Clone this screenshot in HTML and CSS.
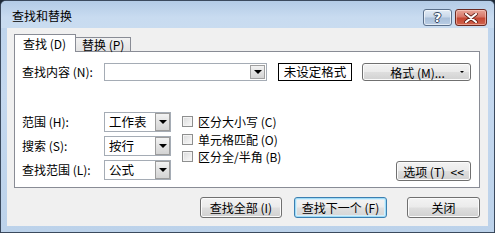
FILE: index.html
```html
<!DOCTYPE html>
<html>
<head>
<meta charset="utf-8">
<link rel="stylesheet" href="styles.css">
</head>
<body>
<div class="window">
  <div class="titlebar">
    <span class="title">查找和替换</span>
    <div class="caption-btns">
      <div class="cap-btn help">?</div>
      <div class="cap-btn close">
        <svg width="14" height="10" viewBox="0 0 14 10"><path d="M2 1 L12 9 M12 1 L2 9" stroke="#5a1a12" stroke-width="3.6" stroke-linecap="round"/><path d="M2 1 L12 9 M12 1 L2 9" stroke="#ffffff" stroke-width="2.2" stroke-linecap="round"/></svg>
      </div>
    </div>
  </div>
  <div class="client">
    <div class="tabs">
      <div class="tab active">查找 (D)</div>
      <div class="tab">替换 (P)</div>
    </div>
    <div class="panel">
      <div class="find-row">
        <span class="lbl">查找内容 (N):</span>
        <div class="combo wide"><div class="combo-field"></div><div class="combo-arrow"><i class="tri"></i></div></div>
        <div class="fmt-preview">未设定格式</div>
        <div class="btn fmt-btn"><span class="fmt-text">格式 (M)...</span><i class="mini-tri"></i></div>
      </div>
      <div class="opts">
        <div class="opt-grid">
          <span class="lbl">范围 (H):</span>
          <div class="combo small"><div class="combo-field">工作表</div><div class="combo-arrow"><i class="tri"></i></div></div>
          <span class="lbl">搜索 (S):</span>
          <div class="combo small"><div class="combo-field">按行</div><div class="combo-arrow"><i class="tri"></i></div></div>
          <span class="lbl">查找范围 (L):</span>
          <div class="combo small"><div class="combo-field">公式</div><div class="combo-arrow"><i class="tri"></i></div></div>
        </div>
        <div class="checks">
          <div class="check"><i class="box"></i><span>区分大小写 (C)</span></div>
          <div class="check"><i class="box"></i><span>单元格匹配 (O)</span></div>
          <div class="check"><i class="box"></i><span>区分全/半角 (B)</span></div>
        </div>
        <div class="btn options-btn">选项 (T)&nbsp;&nbsp;&lt;&lt;</div>
      </div>
    </div>
    <div class="actions">
      <div class="btn act-all">查找全部 (I)</div>
      <div class="btn act-next focused">查找下一个 (F)</div>
      <div class="btn act-close">关闭</div>
    </div>
  </div>
</div>
</body>
</html>
```

FILE: styles.css
```css
* { box-sizing: border-box; }
html, body { margin: 0; padding: 0; }
body {
  width: 495px;
  height: 233px;
  overflow: hidden;
  font-family: "Noto Sans CJK SC", "Liberation Sans", sans-serif;
  font-size: 12px;
  color: #000;
  background: #1f2a38;
}
.window {
  width: 495px;
  height: 233px;
  border: 1px solid #3b4a5e;
  border-radius: 6px 6px 0 0;
  background: linear-gradient(180deg, #bcd3ec 0%, #c4d8ef 40%, #bcd2ea 100%);
  padding: 0 6px 6px 6px;
  display: flex;
  flex-direction: column;
}
.titlebar {
  height: 27px;
  display: flex;
  align-items: flex-start;
  justify-content: space-between;
  background: linear-gradient(180deg, #b3cbe6 0%, #c8dbf0 60%, #c9dcf0 100%);
  margin: 0 -6px;
  padding: 0 6px;
  border-radius: 5px 5px 0 0;
}
.title {
  margin-top: 7px;
  margin-left: 5px;
  line-height: 16px;
  color: #000;
}
.caption-btns {
  display: flex;
  gap: 3px;
  margin-top: 8px;
  margin-right: 1px;
}
.cap-btn {
  height: 17px;
  border: 1px solid #5a6f8a;
  border-radius: 3px;
  display: flex;
  align-items: center;
  justify-content: center;
}
.help {
  width: 29px;
  background: linear-gradient(180deg, #e3ecf6 0%, #c8d7e9 48%, #a9bfd9 52%, #b9cde4 100%);
  box-shadow: inset 0 0 0 1px rgba(255,255,255,0.6);
  color: #fff;
  font-family: "DejaVu Sans", sans-serif;
  font-weight: bold;
  font-size: 13px;
  line-height: 13px;
  text-shadow: 0 0 1px #2a3a55, 1px 0 0 #3a4c6a, -1px 0 0 #3a4c6a, 0 1px 0 #3a4c6a, 0 -1px 0 #3a4c6a;
}
.close {
  width: 32px;
  border-color: #6b2a22;
  background: linear-gradient(180deg, #e8a598 0%, #d7786a 45%, #c54733 55%, #d0654f 100%);
  box-shadow: inset 0 0 0 1px rgba(255,220,210,0.5);
}
.client {
  flex: 1;
  background: #f0f0f0;
  padding: 6px 7px 0 7px;
  display: flex;
  flex-direction: column;
}
.tabs {
  display: flex;
  align-items: flex-end;
  height: 17px;
  position: relative;
  z-index: 1;
}
.tab {
  border: 1px solid #898c95;
  border-bottom: none;
  height: 14px;
  line-height: 13px;
  padding: 0 0 0 6px;
  width: 56px;
  background: linear-gradient(180deg, #f2f2f2 0%, #e3e3e3 100%);
  margin-left: -1px;
  white-space: nowrap;
}
.tab.active {
  width: 62px;
  height: 18px;
  margin-left: 0;
  margin-bottom: -1px;
  background: #fff;
  padding-left: 8px;
  line-height: 17px;
  z-index: 2;
}
.panel {
  width: 466px;
  height: 137px;
  background: #fff;
  border: 1px solid #898c95;
  padding: 11px 8px 0 7px;
  display: flex;
  flex-direction: column;
}
.lbl {
  line-height: 14px;
  white-space: nowrap;
}
.find-row {
  display: flex;
  align-items: center;
}
.find-row .lbl { width: 82px; }
.combo {
  display: flex;
  border: 1px solid #a5acb5;
  background: #fff;
}
.combo.wide { width: 163px; height: 18px; }
.combo.small { width: 67px; height: 20px; }
.combo-field {
  flex: 1;
  padding-left: 4px;
  line-height: 18px;
  font-size: 12.5px;
}
.combo-arrow {
  width: 15px;
  margin: 1px;
  border: 1px solid #a0a0a0;
  background: linear-gradient(180deg, #f3f3f3 0%, #e2e2e2 50%, #d4d4d4 100%);
  display: flex;
  align-items: center;
  justify-content: center;
}
.combo.small .combo-arrow { margin: 0; border-color: #9c9c9c; width: 15px; }
.tri {
  display: block;
  width: 0;
  height: 0;
  border-left: 4px solid transparent;
  border-right: 4px solid transparent;
  border-top: 4px solid #000;
}
.fmt-preview {
  margin-left: 11px;
  width: 74px;
  height: 18px;
  border: 1px solid #000;
  text-align: center;
  line-height: 16px;
  font-size: 12.5px;
}
.btn {
  border: 1px solid #707070;
  border-radius: 3px;
  background: linear-gradient(180deg, #f3f3f3 0%, #ebebeb 48%, #dedede 52%, #d1d1d1 100%);
  box-shadow: inset 0 0 0 1px #fbfbfb;
  display: flex;
  align-items: center;
  justify-content: center;
  white-space: nowrap;
}
.fmt-btn {
  margin-left: 10px;
  width: 109px;
  height: 18px;
  position: relative;
}
.fmt-text { margin-left: 2px; }
.mini-tri {
  position: absolute;
  right: 6px;
  top: 7px;
  width: 0;
  height: 0;
  border-left: 2px solid transparent;
  border-right: 2px solid transparent;
  border-top: 2px solid #000;
}
.opts {
  margin-top: 31px;
  display: flex;
  align-items: flex-start;
}
.opt-grid {
  display: grid;
  grid-template-columns: 82px 67px;
  row-gap: 4px;
  align-items: center;
}
.checks {
  margin-left: 11px;
  margin-top: 1px;
  display: flex;
  flex-direction: column;
}
.check {
  display: flex;
  align-items: center;
  height: 17.5px;
  gap: 5px;
  white-space: nowrap;
}
.box {
  display: block;
  width: 11px;
  height: 11px;
  border: 1px solid #8e8f8f;
  background: linear-gradient(135deg, #d9dadb 0%, #eeeeee 60%, #fafafa 100%);
  box-shadow: inset 0 0 0 1px #f4f4f4;
}
.options-btn {
  margin-left: auto;
  align-self: flex-end;
  width: 75px;
  height: 20px;
  margin-bottom: -1px;
}
.actions {
  display: flex;
  justify-content: flex-end;
  margin-top: 9px;
  width: 466px;
}
.actions .btn { height: 21px; }
.act-all { width: 82px; }
.act-next { width: 93px; margin-left: 12px; }
.act-close { width: 73px; margin-left: 20px; }
.btn.focused {
  border-color: #3c7fb1;
  box-shadow: inset 0 0 0 1px #9fdcf7, inset 0 0 0 2px #d6eefa;
  background: linear-gradient(180deg, #f4f4f4 0%, #ececec 48%, #e0e0e0 52%, #d4d4d4 100%);
}
```
